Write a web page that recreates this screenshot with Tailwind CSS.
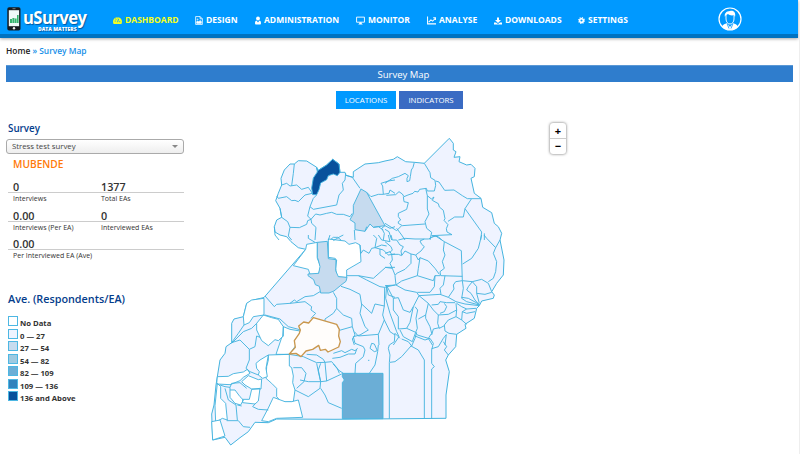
<!DOCTYPE html>
<html lang="en">
<head>
<meta charset="utf-8">
<title>uSurvey</title>
<script src="https://cdn.jsdelivr.net/npm/@tailwindcss/browser@4"></script>
</head>
<body class="relative h-[454px] w-[800px] overflow-hidden bg-white font-['Open_Sans',sans-serif] text-[#333]">
<header class="flex h-[38px] w-[798px] border-b-4 border-[#0072c0] bg-[#0099ff] text-white shadow-[0_1px_3px_rgba(0,0,0,0.35)]">
  <div class="flex w-[113px] pl-[7px] pt-[7px]">
    <svg class="h-6 w-[14px] shrink-0" viewBox="0 0 14 24"><rect x=".3" y=".3" width="13.2" height="23.2" rx="1.8" fill="#151a20"/><rect x="1.8" y="3.2" width="10.3" height="16" fill="#eefaf8"/><path d="M3 16v-4h2v4zm2.4 0v-5h2v5zm2.4 0v-4.5h1.8V16zm2.2 0V8h1.6v8z" fill="#35b56e"/><path d="M5.5 1.7h3" stroke="#aaa" stroke-width=".7"/><circle cx="7" cy="21.3" r="1.2" fill="#eee"/></svg>
    <div class="ml-[2px] w-[65px] [text-shadow:1px_1px_1px_rgba(0,40,90,0.6)]">
      <div class="mt-[2px] h-[17px] w-[70px] origin-left scale-x-[0.95] text-[17.5px] leading-[17px] font-bold tracking-[-0.6px]">uSurvey</div>
      <div class="ml-[15px] h-[6px] text-[5px] leading-[6px] font-extrabold whitespace-nowrap">DATA MATTERS</div>
    </div>
  </div>
  <nav class="grid h-[34px] grid-cols-[82px_60px_101px_71px_67px_84px_140px] items-center pt-[7px] text-[8.5px] font-bold whitespace-nowrap">
    <div class="flex items-center gap-[3px] text-[#f5ff20]"><svg class="size-[9px]" viewBox="0 0 16 16"><path fill="currentColor" d="M1 14a8 8 0 1 1 14 0z"/><path stroke="#0099ff" stroke-width="1.5" d="M8 11l2-6M3 9h2M11 10h2M4 5l2 1M8 3v1"/></svg>DASHBOARD</div>
    <div class="flex items-center gap-[3px]"><svg class="h-[9px] w-2" viewBox="0 0 14 16" fill="none" stroke="currentColor" stroke-width="1.4"><path d="M1 1h8l4 4v10H1zM9 1v4h4"/><path fill="currentColor" d="M3 13v-3l2-1 2 2 2-3 2 2v3z"/><circle cx="4.5" cy="6" r=".8"/></svg>DESIGN</div>
    <div class="flex items-center gap-[3px]"><svg class="h-[9px] w-[6px]" viewBox="0 0 12 16" fill="currentColor"><circle cx="6" cy="4" r="3.8"/><path d="M3 8l3 4 3-4c3 1 3 4 3 6l-1 2H1l-1-2c0-2 0-5 3-6z"/></svg>ADMINISTRATION</div>
    <div class="flex items-center gap-[3px]"><svg class="h-[9px] w-[9px]" viewBox="0 0 16 16"><path fill="none" stroke="currentColor" stroke-width="1.6" d="M1 2h14v9H1z"/><path fill="currentColor" d="M6 11h4v2l2 2H4l2-2z"/></svg>MONITOR</div>
    <div class="flex items-center gap-[3px]"><svg class="h-[9px] w-[9px]" viewBox="0 0 16 16" fill="none" stroke="currentColor" stroke-width="1.8"><path d="M1 1v13h15M3 11l4-4 3 2 5-5M11 3h4v4"/></svg>ANALYSE</div>
    <div class="flex items-center gap-[3px]"><svg class="size-2" viewBox="0 0 16 16" fill="currentColor"><path d="M6 1h4v5h4l-6 6-6-6h4zM0 11h4l4 3 4-3h4v4H0z"/></svg>DOWNLOADS</div>
    <div class="flex items-center gap-[3px]"><svg class="size-[7px]" viewBox="0 0 16 16" fill="none" stroke="currentColor"><circle cx="8" cy="8" r="4.2" stroke-width="3.6"/><circle cx="8" cy="8" r="6.7" stroke-width="2.4" stroke-dasharray="2.6 2.66"/></svg>SETTINGS</div>
  </nav>
  <svg class="mt-[7px] size-6 shrink-0" viewBox="0 0 24 24" fill="none" stroke="#fff"><circle cx="12" cy="12" r="11" stroke-width="1.2"/><path fill="#fff" stroke="none" d="M4 20c1-3 3-3 5-4l3 4 3-4c2 1 4 1 5 4-4 4-12 4-16 0z"/><path stroke-width=".9" d="M8 8v4c0 3 2 5 4 5s4-2 4-5V8"/><path fill="#fff" stroke="none" d="M7 10c-1-3 1-6 5-6 4-1 6 2 5 6l-1-2c-2 1-5 0-6-1-1 1-3 1-3 3z"/><path stroke="#0099ff" stroke-width=".8" d="M9 16.5l2 5M15 16.5l-2 5"/></svg>
</header>
<main class="w-[793px] pl-[6px]">
  <div class="h-[27px] pt-[7px] text-[8.4px] leading-[12px] font-semibold text-[#222]">Home <span class="text-[#168fe8]">» Survey Map</span></div>
  <h1 class="h-[17px] border-t border-[#5a98d5] bg-[#2f7dcd] pl-[8px] text-center text-[9.5px] leading-[17px] text-white">Survey Map</h1>
  <div class="mt-[9px] flex h-[18px] gap-[3px] pl-[330px] text-center text-[7.8px] leading-[18px] text-white">
    <div class="w-[60px] bg-[#0099ff]">LOCATIONS</div><div class="w-[64px] bg-[#3a6bc3]">INDICATORS</div>
  </div>
  <div class="flex">
    <aside class="w-[178px] shrink-0 pt-[12px]">
      <h2 class="pl-[2px] text-[9.8px] leading-[15px] font-semibold text-[#053d8c]">Survey</h2>
      <div class="mt-[3px] flex h-[15px] items-center justify-between rounded-[3px] border border-[#aaa] bg-linear-to-b from-white to-[#eee] pr-[5px] pl-[5px] text-[7.8px] text-[#444]">Stress test survey<span class="border-x-[3px] border-t-[3px] border-x-transparent border-t-[#888]"></span></div>
      <div class="pt-[3px] pl-[7px] text-[10.2px] leading-[15px] font-semibold text-[#ff7a08]">MUBENDE</div>
      <div class="ml-[2px] mt-[8px] text-[7px] leading-[10px] whitespace-nowrap">
        <div class="grid h-[29px] grid-cols-[88px_88px] grid-rows-[13px_16px]"><b class="border-b border-[#ccc] pl-[5px] text-[10.8px] leading-[14px] font-semibold">0</b><b class="border-b border-[#ccc] pl-[5px] text-[10.8px] leading-[14px] font-semibold">1377</b><span class="pt-[1px] pl-[5px]">Interviews</span><span class="pt-[1px] pl-[5px]">Total EAs</span></div>
        <div class="grid h-[28px] grid-cols-[88px_88px] grid-rows-[13px_15px]"><b class="border-b border-[#ccc] pl-[5px] text-[10.8px] leading-[14px] font-semibold">0.00</b><b class="border-b border-[#ccc] pl-[5px] text-[10.8px] leading-[14px] font-semibold">0</b><span class="pt-[1px] pl-[5px]">Interviews (Per EA)</span><span class="pt-[1px] pl-[5px]">Interviewed EAs</span></div>
        <div class="grid h-[28px] grid-rows-[13px_15px]"><b class="border-b border-[#ccc] pl-[5px] text-[10.8px] leading-[14px] font-semibold">0.00</b><span class="pt-[1px] pl-[5px]">Per Interviewed EA (Ave)</span></div>
      </div>
      <h2 class="mt-[26px] pl-[2px] text-[10.8px] leading-[16px] font-semibold whitespace-nowrap text-[#053d8c]">Ave. (Respondents/EA)</h2>
      <div class="mt-[9px] ml-[2px] flex flex-col gap-[2.5px] text-[7.7px] leading-[10px] font-bold [&_i]:h-[10px] [&_i]:w-[10px] [&_i]:border [&_i]:border-[#4db7e3] [&_span]:relative [&_span]:top-[2px] [&>div]:flex [&>div]:h-[10px] [&>div]:gap-[2px]">
        <div><i class="bg-white"></i><span>No Data</span></div>
        <div><i class="bg-[#eff3ff]"></i><span>0 — 27</span></div>
        <div><i class="bg-[#c6dbef]"></i><span>27 — 54</span></div>
        <div><i class="bg-[#9ecae1]"></i><span>54 — 82</span></div>
        <div><i class="bg-[#6baed6]"></i><span>82 — 109</span></div>
        <div><i class="bg-[#3182bd]"></i><span>109 — 136</span></div>
        <div><i class="bg-[#08519c]"></i><span>136 and Above</span></div>
      </div>
    </aside>
    <section class="relative h-[345px] w-[609px]">
      <svg class="absolute top-0 left-4 h-[345px] w-[330px]" viewBox="200 109 330 345" fill="none" stroke="#45b4df" stroke-linejoin="round">
        <path fill="#eff3ff" stroke-width="1" d="M274.3 226.7L276.7 220 281.7 217.3 280 208.3 275.7 200.7 278.3 193.3 281.7 185 281 178.3 284.3 170 290 164 294.3 164 298.3 160.7 306.7 161 316.7 167.3 317.7 170.7 326.7 165 332.7 159.3 339 164 340 172.3 345 172.3 346 175.3 353.3 177.3 353.3 171.7 365 164 378.3 162.7 385 161 393.3 159.3 397.3 156.7 405.7 161.7 414.3 162.3 424.3 163.3 449.3 138.3 453.3 143.3 453.3 150 456 151.7 454 157.3 460 156.7 459 161.7 466.7 165 471 164.3 475 168.3 474.3 176.7 471 178.3 474.3 193.3 481 198.3 482.7 207.3 491.7 212.7 494.3 223.3 498.3 226.7 501.7 233.3 500 240 501 245 504 260 503.3 275 496.7 283.3 491.7 291.7 494.3 295 493.3 298.3 481.7 301 479.3 305.7 476.7 308.3 474.3 318.3 465 324.3 466 328.3 456.7 334.3 455.7 346.7 448.3 355 445.7 360 449.3 371.7 446 395 446 418.3 335 419.3 276.7 419 268.3 422.7 255 422.3 248.3 431.7 240 437.7 230.7 445 225 437.3 212.7 440 211.7 414 214 405 216 385 220 360 225 353.3 226 346.7 231.7 342.7 231.7 323.3 234 319 243.3 316.7 246.7 303.3 253.3 300 264 297.5 305.7 249.3 298.3 247.7 291 241.7 286.7 236.7 280 235 275 232Z"/>
        <!-- north-west -->
        <g transform="translate(265 130) scale(.33333)" stroke-width="2.8">
          <path fill="#08519c" d="M155 112l3 10 27-17 18-17 19 14 3 25-8 10-12-5-15 5-5 12-18 10-5 20-7 15-12 0-3-20 5-30 12-18z"/>
          <path fill="#c6dbef" d="M288 177l17 10 55 100-35 5-10-10-15 22-30-5 0-20-15-10 10-18 0-25z"/>
          <path d="M88 102L85 130 80 167M50 165L65 160 75 168 95 165 110 178 130 172 142 190 120 195 100 215 90 211 80 212 65 200 40 205 35 198M155 195L145 205 135 230 145 238 215 225 222 195 235 180 232 160 240 150 242 130M135 230L128 258 138 268M243 136L262 142 285 175M138 268L152 252 165 255 185 250 200 247 215 253 235 253 255 260 262 250M138 268L140 280 153 292 150 330M45 235L50 262 68 275 75 292 103 293 125 283 128 272 138 268M75 292L70 318 80 330M28 290L30 315 42 330M305 187L318 200 340 193 355 193 353 168 348 160 370 153 390 150M355 193L372 190 375 180 390 190M360 287L350 295 358 310 355 330M360 287L375 295 390 290M355 300L340 290 325 292M195 330L205 322 218 322 228 330M268 300L270 330M300 304L305 290"/>
        </g>
        <!-- north-east -->
        <g transform="translate(385 130) scale(.33333)" stroke-width="2.8">
          <path d="M88 97l-4 15-5 8-3 20-2 12-8 3 0-10 4-8-10-7-20 10-18 5-22 15M118 100l17 28 2 15 13 8 2 15-4 17-21 0-3-8-20 3-5 8-10-2-5 6-15 5-12 5-5-8-10-7-10 9-28 2M152 153l10 3 17 25 28-1 25 17 15 9 41 0M122 175l5 22 0 40 5 15-12 23 5 20 15 12M55 200l2 15 13 3-5 20-25 12 0 10 7 10-7 5 0 5 12 7 68-5M127 197l12 10 8-6-5 10 18 10 3 10 12 10 5 25-3 5 12 13-5 12 2 10 15 8-61 3M189 274l20-13 26 0 5-25 19-29M240 236l50 70-3 24M298 310l0 20M140 307l-5 23M0 280l35 22 15-15M35 295L50 315 60 330M0 298L12 305 20 330M140 318L160 320 170 330"/>
        </g>
        <!-- centre -->
        <g transform="translate(265 235) scale(.33333)" stroke-width="2.8">
          <path fill="#fff" d="M122 43l3-15 32-6v48l10 25-7 25-25-2-5-15-45-11zM190 12l50 6 12 10 20-5 13 7 3 50-43 25 0 23-30-3-3-25 3-25-5-5-20-3z"/>
          <path fill="#c6dbef" d="M157 22l30-3 3 52 23 3-1 33 8 18 26 2-3 12-12 9-24 20-15 6-25 0-4-20-12-5-5-15-17-12 0-5 32-2 4-20-5-20-3-8z"/>
          <path d="M0 183L28 215 35 208 75 205 88 195 95 200 120 185 145 182 165 170M75 205L120 200 140 215 138 225 152 235 138 250M0 240L45 252 70 275 108 285M205 172L215 190 215 220 205 235 180 252 180 262M215 220L235 240 260 250 262 275 220 287M228 154L255 163 285 178 290 210 285 235 300 275 310 285 285 300M262 275L270 300 262 312 268 330M268 290L280 303 340 298M246 122L280 122 325 130 362 97 390 97M280 122L305 135 345 155 359 157 390 150M359 157L358 213 353 240 358 255 340 298 342 330M290 207L320 235 330 207 358 213M358 255L375 290 390 300M365 155L370 180 390 187M285 30L288 55 295 45 312 55 320 40 330 38 335 10 325 0M330 38L355 45 370 60 390 57M330 38L350 30 365 33M340 0L350 15 375 20 370 0M345 42L345 60 360 70M150 22L130 10 130 0M190 15L195 0M205 17L225 5 235 0"/>
        </g>
        <!-- east -->
        <g transform="translate(385 235) scale(.33333)" stroke-width="2.8">
          <path d="M152 3L178 20 229 47 232 137M178 20L175 45 180 60 172 80 178 100 165 110 167 122 232 124M150 3L130 12 118 12 105 18 110 28 118 35 108 48 92 60 78 57 60 48 50 62 40 58 20 58 15 50 0 55M0 20L18 35 22 45 15 52M18 0L22 15 35 15 45 30 55 35 48 48 50 60M40 15L60 10 90 12 118 12M92 60L100 75 105 68 130 78 150 100 163 118M105 68L100 100 97 122M78 57L78 85 60 103 35 115 30 122 33 150M20 58L22 75 15 85 22 100 30 120M0 97L22 100M33 150L50 138 97 122 145 137 150 122 165 122M0 152L33 150 60 165 95 172 102 182 165 178 190 187 213 200 240 207 283 212M97 172L135 172 148 155 150 122M180 122L175 150 165 160 168 178M232 137L212 140 205 150 207 162 190 187M232 137L235 160 230 190 245 200 283 210M232 137L262 140 290 133 310 145 320 170M262 140L250 155 245 165 258 175 270 195 283 210M262 140L275 155 275 175 283 205M275 175L300 178 320 172M230 187L250 190 283 208M290 0L280 40 260 70 233 87M297 0L305 10 332 38 325 55 335 80 332 110 325 130 310 140M345 15L332 38M5 152L2 190 15 235 35 290 42 305 25 330M5 152L25 190 25 225 40 245 40 282 65 280 75 262 85 215M25 190L40 188 55 225 75 232 85 215 102 182M90 215L98 225 93 250 97 280 92 292 65 280M45 285L55 305 82 320 92 292 97 300 130 310 140 295 135 275 122 250 122 240M102 182L130 205 122 240 100 252M130 205L145 225 160 240 158 265 163 280 178 272M140 210L160 208 165 200 185 203 210 203M178 205L185 215 178 230 165 235M160 240L190 238 215 225 213 205M215 225L213 245 190 255 178 270 180 288 192 295 215 298M213 245L230 255 245 268M230 255L232 230 245 222 273 220M215 205L230 215 245 222M232 230L245 235 270 230M163 278L145 282 140 300M184 298L180 330M130 310L142 330"/>
        </g>
        <!-- south-west -->
        <g transform="translate(200 300) scale(.33333)" stroke-width="2.8">
          <path fill="#fff" d="M140 10L155 0 192 -5 192 45 160 50 148 68 132 75 130 50zM170 70l20-25 25 8 20 5 15 22-2 30-13 12-10-3-20 18-20-15-15-32zM250 80l20 8 30 5-10 40-22 30-40 0 17-50 5-5zM205 165l63-2 0 35 7 5 5 25-2 20 7 22-5 35-35 2-15-17 0-25-15-15-17-15 2-35 5-20z"/>
          <path fill="#fff" d="M205 165L180 180 168 190 170 205 178 215 175 225 188 235 202 230 198 205zM220 292l35 13 20 0 20-5 13 52-78 3-25 10-20-3 20-38zM52 230l33-1 15-8 30-5 12-8 8 12-20 12-10 10-30 12-40-2zM125 245l20-18 30 12 10-2-2 30-28 0-20-12zM52 250l10 10 0 35 15 15 5 50-15-5-20 12-2-50zM90 270L105 270 120 290 130 300 122 315 105 310 90 292zM155 268L180 265 175 303 165 312 128 308 128 298 148 298z"/>
          <path fill="#fff" d="M35 365L60 360 75 408 38 420z"/>
          <path d="M170 70L155 85 130 95 95 130M132 75L115 100 95 128 120 120 148 148 148 180 138 205 150 215 175 225M148 148L165 140 170 108 180 112M60 255L75 260 90 262 90 270M90 262L95 250 120 248 140 265M75 265L85 300 108 315 112 360M112 315L125 318M165 312L158 320 175 328 205 330M80 362L115 362 130 380 150 382M268 163L310 170 350 188 375 187 395 185 412 205 418 220M350 190L355 215 362 245 325 245 300 240M280 203L305 203 318 220 312 245 290 265M285 270L325 290 360 265 362 245M362 190L355 210 362 245M375 187L380 243 362 245M380 243L425 222M362 265L375 285 385 308 425 325M320 163L350 165 370 178 375 187"/>
          <path d="M340 53l70 20 8 15-2 20 5 17-5 16-32 15-8-8-15 3-5-15-18 12-20 5-15 17-15-10-20 2 18-20-3-20 15-22 3-10-5-12 15-12 15 3z" fill="#fffdfb" stroke="#c9974d" stroke-width="4"/>
          <path fill="#6baed6" d="M427 220l122 0 0 136-122 0 0-108 6-8-6-10z"/>
        </g>
        <!-- lake shore -->
        <g transform="translate(335 300) scale(.33333)" stroke-width="2.8">
          <path d="M75 105L55 110 60 130 85 140 90 150 85 170 62 190 60 220M130 135L128 155 120 195 103 220M105 145L110 130 118 132 127 152 118 155zM163 356L163 188 165 165 160 145 163 135 178 125 180 100 195 115M165 187L180 185 200 170 228 138 250 150 268 180 268 356M200 117L220 125 230 138 240 115 245 97M240 108L270 120 285 115 295 130 290 150 290 190 298 200 290 207 290 356M290 146L310 140 325 115 333 105M325 125L335 140 328 150 340 165M-5 160L20 152 30 158 50 148 60 152 68 145M-8 175L15 172 40 162 60 162 65 148M-5 192L10 210 25 220M99 181h4"/>
        </g>
      </svg>
      <div class="absolute top-[14px] left-[366px] h-[31px] w-4 rounded-[3px] bg-white text-center text-[11px] leading-[15px] font-bold text-black shadow-[0_0_3px_rgba(0,0,0,0.6)]"><div class="h-4 border-b border-[#ccc]">+</div><div class="leading-[13px]">−</div></div>
    </section>
  </div>
</main>
<div class="absolute top-[10px] right-0 h-[444px] w-px bg-[#eee]"></div>
</body>
</html>
